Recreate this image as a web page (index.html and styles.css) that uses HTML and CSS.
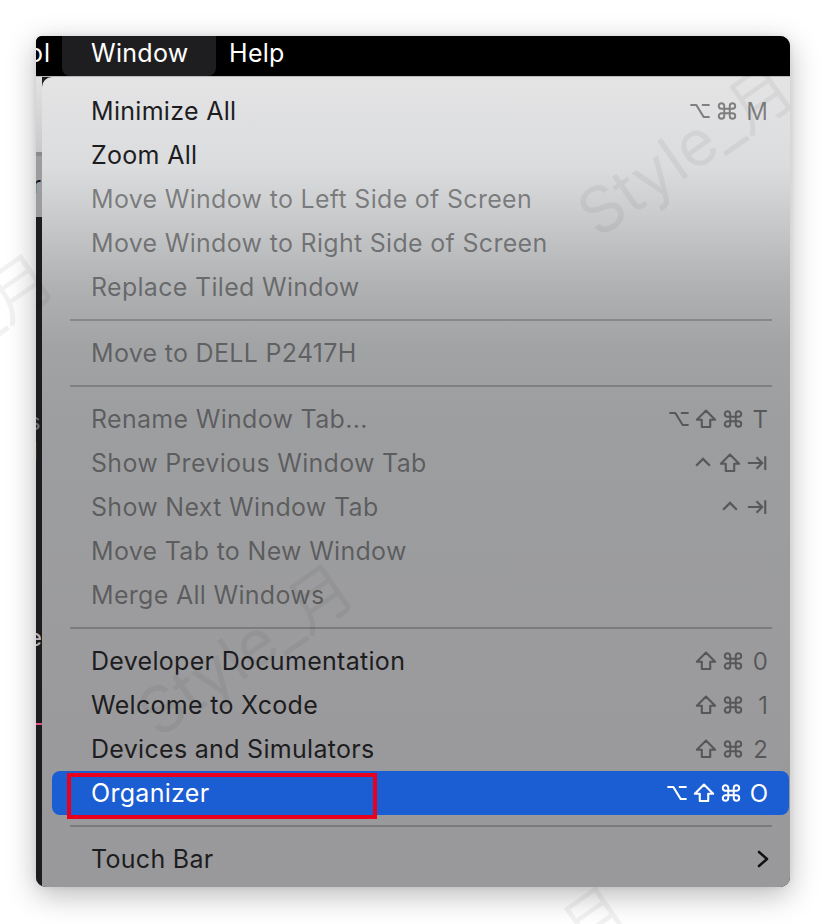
FILE: index.html
```html
<!DOCTYPE html>
<html>
<head>
<meta charset="utf-8">
<link rel="stylesheet" href="styles.css">
</head>
<body>
<svg width="0" height="0" class="defs">
  <defs>
    <symbol id="opt" viewBox="0 0 24 24"><path d="M1.5 5.5 H8 L16 18.5 H22.5 M14 5.5 H22.5" fill="none" stroke="currentColor" stroke-width="2.3" stroke-linejoin="round"/></symbol>
    <symbol id="shift" viewBox="0 0 24 24"><path d="M12 2.8 L22 12.8 H16.6 V20.8 H7.4 V12.8 H2 Z" fill="none" stroke="currentColor" stroke-width="2.3" stroke-linejoin="round"/></symbol>
    <symbol id="cmd" viewBox="0 0 24 24"><path d="M9 6.5 A3 3 0 1 0 6 9.5 H18 A3 3 0 1 0 15 6.5 V17.5 A3 3 0 1 0 18 14.5 H6 A3 3 0 1 0 9 17.5 Z" fill="none" stroke="currentColor" stroke-width="2.1"/></symbol>
    <symbol id="ctrl" viewBox="0 0 24 24"><path d="M4.5 15 L12 7.5 L19.5 15" fill="none" stroke="currentColor" stroke-width="2.5" stroke-linejoin="miter"/></symbol>
    <symbol id="tab" viewBox="0 0 24 24"><path d="M2 12 H17.5 M11.5 5.8 L17.7 12 L11.5 18.2 M21 4.5 V19.5" fill="none" stroke="currentColor" stroke-width="2.3"/></symbol>
  </defs>
</svg>
<div class="frame">
  <div class="menubar">
    <span class="mb-item mb-cut">ol</span>
    <span class="mb-item mb-active">Window</span>
    <span class="mb-item">Help</span>
  </div>
  <div class="body">
    <div class="strip">
      <div class="strip-light"></div>
      <div class="strip-grey"><span>r</span></div>
      <div class="strip-dark">
        <span class="frag f1">s</span>
        <span class="frag f2">l</span>
        <span class="frag f3">e</span>
        <span class="frag f4"></span>
      </div>
    </div>
    <div class="panel">
      <div class="row"><span class="label">Minimize All</span><span class="keys"><svg class="k"><use href="#opt"/></svg><svg class="k"><use href="#cmd"/></svg><span class="kc">M</span></span></div>
      <div class="row"><span class="label">Zoom All</span></div>
      <div class="row off"><span class="label">Move Window to Left Side of Screen</span></div>
      <div class="row off"><span class="label">Move Window to Right Side of Screen</span></div>
      <div class="row off"><span class="label">Replace Tiled Window</span></div>
      <div class="sep"></div>
      <div class="row off"><span class="label">Move to DELL P2417H</span></div>
      <div class="sep"></div>
      <div class="row off"><span class="label">Rename Window Tab...</span><span class="keys"><svg class="k"><use href="#opt"/></svg><svg class="k"><use href="#shift"/></svg><svg class="k"><use href="#cmd"/></svg><span class="kc">T</span></span></div>
      <div class="row off"><span class="label">Show Previous Window Tab</span><span class="keys"><svg class="k"><use href="#ctrl"/></svg><svg class="k"><use href="#shift"/></svg><svg class="k"><use href="#tab"/></svg></span></div>
      <div class="row off"><span class="label">Show Next Window Tab</span><span class="keys"><svg class="k"><use href="#ctrl"/></svg><svg class="k"><use href="#tab"/></svg></span></div>
      <div class="row off"><span class="label">Move Tab to New Window</span></div>
      <div class="row off"><span class="label">Merge All Windows</span></div>
      <div class="sep"></div>
      <div class="row"><span class="label">Developer Documentation</span><span class="keys"><svg class="k"><use href="#shift"/></svg><svg class="k"><use href="#cmd"/></svg><span class="kc">0</span></span></div>
      <div class="row"><span class="label">Welcome to Xcode</span><span class="keys"><svg class="k"><use href="#shift"/></svg><svg class="k"><use href="#cmd"/></svg><span class="kc">1</span></span></div>
      <div class="row"><span class="label">Devices and Simulators</span><span class="keys"><svg class="k"><use href="#shift"/></svg><svg class="k"><use href="#cmd"/></svg><span class="kc">2</span></span></div>
      <div class="row sel"><span class="label">Organizer</span><span class="keys"><svg class="k"><use href="#opt"/></svg><svg class="k"><use href="#shift"/></svg><svg class="k"><use href="#cmd"/></svg><span class="kc">O</span></span><span class="redbox"></span></div>
      <div class="sep"></div>
      <div class="row"><span class="label">Touch Bar</span>
        <svg class="chev" width="14" height="20" viewBox="0 0 14 20"><path d="M3 3 L11 10 L3 17" fill="none" stroke="#111" stroke-width="2.6" stroke-linecap="round" stroke-linejoin="round"/></svg>
      </div>
    </div>
  </div>
</div>
<div class="wm w1">Style_月</div>
<div class="wm w2">Style_月</div>
<div class="wm w3">Style_月</div>
<div class="wm w4">月</div>
</body>
</html>
```
FILE: styles.css
```css
html, body {
  margin: 0;
  padding: 0;
  background: #ffffff;
  width: 826px;
  height: 924px;
  overflow: hidden;
  position: relative;
  font-family: Inter, "Noto Sans", "Noto Sans CJK SC", sans-serif;
}
.defs { position: absolute; width: 0; height: 0; }
.frame {
  position: absolute;
  left: 36px;
  top: 36px;
  width: 754px;
  height: 851px;
  border-radius: 6px 10px 10px 10px;
  overflow: hidden;
  display: flex;
  flex-direction: column;
  box-shadow: 0 8px 30px rgba(0,0,0,0.28), 0 0 6px rgba(0,0,0,0.08);
  background: #1c1c1e;
}
.menubar {
  height: 40px;
  background: #000;
  display: flex;
  align-items: stretch;
  border-bottom: 1px solid #b9b9bb;
  flex: none;
}
.mb-item {
  color: #fff;
  font-size: 25px;
  letter-spacing: 0.3px;
  display: flex;
  align-items: center;
  padding: 0 0 7px 13px;
  box-sizing: border-box;
}
.mb-cut {
  margin-left: -8px;
  padding-left: 0;
  width: 34px;
  letter-spacing: 1px;
}
.mb-active {
  background: #1e1e20;
  border-radius: 0 0 8px 8px;
  width: 154px;
  padding-left: 29px;
}
.body {
  flex: 1;
  display: flex;
}
.strip {
  width: 6px;
  flex: none;
  display: flex;
  flex-direction: column;
  background: #1c1c1e;
}
.strip-light {
  height: 75px;
  background: linear-gradient(#e2e2e2, #c9c9cb);
}
.strip-grey {
  height: 65px;
  background: #9c9c9e;
  border-top: 4px solid #8a8a8c;
  box-sizing: border-box;
  position: relative;
  overflow: hidden;
}
.strip-grey span {
  position: absolute;
  left: -4px;
  top: 14px;
  font-size: 24px;
  color: #111;
}
.strip-dark {
  flex: 1;
  position: relative;
  overflow: hidden;
}
.frag {
  position: absolute;
  font-size: 24px;
  left: -8px;
}
.f1 { top: 190px; color: #6a6e78; }
.f2 { top: 220px; color: #5fb39a; left: -4px; }
.f3 { top: 406px; color: #b8b8bc; }
.f4 { top: 506px; left: 0; width: 6px; height: 2px; background: #e0508a; }
.panel {
  flex: 1;
  border-radius: 10px 0 0 0;
  padding: 12px 1px 0 10px;
  background: linear-gradient(#e4e4e5 0px, #dbdcde 90px, #c6c7c9 150px, #b0b1b3 210px, #a2a3a5 270px, #9d9ea0 340px, #9b9b9d 600px, #99999b 100%);
  display: flex;
  flex-direction: column;
}
.row {
  height: 44px;
  display: flex;
  align-items: center;
  justify-content: space-between;
  padding: 0 21px 0 39px;
  color: #1d1d1f;
  font-size: 25px;
  letter-spacing: 0.3px;
  position: relative;
  border-radius: 8px;
  flex: none;
}
.row.off { color: rgba(0,0,0,0.42); }
.keys {
  display: flex;
  align-items: center;
  gap: 5px;
  color: rgba(0,0,0,0.44);
}
.k {
  width: 22px;
  height: 22px;
  display: block;
}
.kc {
  font-size: 24px;
  letter-spacing: 0;
  margin-left: 3px;
  min-width: 16px;
  text-align: right;
}
.row.sel {
  background: #1b5dd2;
  color: #fff;
}
.row.sel .keys { color: #fff; }
.redbox {
  position: absolute;
  left: 15px;
  top: 2px;
  width: 310px;
  height: 46px;
  box-sizing: border-box;
  border: 4px solid #e8001c;
}
.sep {
  height: 22px;
  flex: none;
  display: flex;
  align-items: center;
  padding: 0 17px 0 18px;
}
.sep::after {
  content: "";
  display: block;
  height: 2px;
  flex: 1;
  background: rgba(0,0,0,0.2);
}
.chev { margin-right: -2px; }
.wm {
  position: absolute;
  font-size: 64px;
  color: rgba(0,0,0,0.05);
  transform: rotate(-35deg);
  white-space: nowrap;
  pointer-events: none;
  font-family: Inter, "Noto Sans CJK SC", sans-serif;
}
.w1 { left: 560px; top: 100px; }
.w2 { left: -180px; top: 290px; }
.w3 { left: 120px; top: 600px; }
.w4 { left: 560px; top: 870px; }
```
